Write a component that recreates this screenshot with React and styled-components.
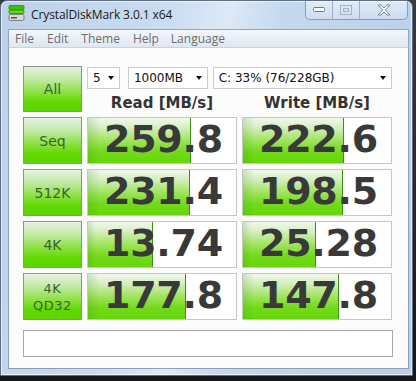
import React from "react";
import styled, { createGlobalStyle } from "styled-components";

const Global = createGlobalStyle`
  html, body {
    margin: 0;
    padding: 0;
    background: linear-gradient(to bottom, #3a3a3a, #161616);
    height: 381px;
    overflow: hidden;
  }
`;

const Win = styled.div`
  width: 413px;
  height: 376px;
  box-sizing: border-box;
  border: 1px solid #5e6f84;
  border-radius: 7px 7px 0 0;
  background: linear-gradient(100deg, #bcd2ea 0%, #c9dcf0 35%, #dde9f6 48%, #c4d8ee 60%, #b8cfe8 100%);
  display: flex;
  flex-direction: column;
  font-family: "DejaVu Sans", Verdana, sans-serif;
  box-shadow: inset 0 0 0 1px rgba(255, 255, 255, 0.6);
`;

const TitleBar = styled.div`
  height: 28px;
  display: flex;
  align-items: flex-start;
  padding-left: 7px;
`;

const Title = styled.span`
  font-family: "Open Sans", "Noto Sans", sans-serif;
  font-size: 12px;
  color: #1a1a1a;
  margin-left: 6px;
  margin-top: 5px;
  letter-spacing: -0.1px;
`;

const Icon = styled.svg`
  margin-top: 4px;
`;

const Caption = styled.div`
  margin-left: auto;
  margin-right: 4px;
  display: flex;
  height: 18px;
  border: 1px solid #8c9db3;
  border-top: none;
  border-radius: 0 0 5px 5px;
  overflow: hidden;
  background: linear-gradient(to bottom, rgba(255, 255, 255, 0.55), rgba(220, 232, 245, 0.4));
`;

const CapBtn = styled.div`
  width: ${(p) => p.w}px;
  display: flex;
  align-items: center;
  justify-content: center;
  border-left: ${(p) => (p.first ? "none" : "1px solid #9fb0c5")};
`;

const MenuBar = styled.div`
  margin-left: 7px;
  width: 401px;
  height: 19px;
  box-sizing: border-box;
  border: 1px solid #93a6bd;
  border-bottom: 1px solid #c9d3df;
  background: linear-gradient(to bottom, #f4f7fb, #dfe7f1);
  display: flex;
  align-items: center;
  padding-left: 6px;
`;

const MenuItem = styled.span`
  font-family: "Open Sans", "Noto Sans", sans-serif;
  font-size: 12px;
  color: #6d6d6d;
  margin-right: ${(p) => p.mr}px;
`;

const Client = styled.div`
  margin-left: 7px;
  width: 401px;
  box-sizing: border-box;
  border: 1px solid #8ea0b6;
  border-top: none;
  background: #fcfcfc;
  padding: 18px 0 11px 14px;
`;

const Grid = styled.div`
  display: grid;
  grid-template-columns: 59px 150px 150px;
  grid-template-rows: 46px repeat(4, 47px);
  column-gap: 5px;
  row-gap: 5px;
`;

const GreenButton = styled.div`
  box-sizing: border-box;
  border: 1px solid #8b9586;
  background: linear-gradient(to bottom, #e6f3df 0%, #c6ebae 25%, #8fe24a 55%, #62d800 80%, #5dd300 100%);
  display: flex;
  flex-direction: column;
  align-items: center;
  justify-content: center;
  font-family: "DejaVu Sans", Verdana, sans-serif;
  font-size: ${(p) => (p.small ? 13 : 14)}px;
  line-height: ${(p) => (p.small ? 17 : 16)}px;
  color: #3f5f30;
  letter-spacing: ${(p) => (p.small ? 0.5 : 0)}px;
`;

const TopArea = styled.div`
  grid-column: 2 / 4;
  display: flex;
  flex-direction: column;
`;

const Combos = styled.div`
  display: flex;
  margin-top: 1px;
  height: 22px;
`;

const Combo = styled.div`
  width: ${(p) => p.w}px;
  margin-right: ${(p) => p.mr || 0}px;
  box-sizing: border-box;
  border: 1px solid #cdcdcd;
  background: #fff;
  display: flex;
  align-items: center;
  padding: 0 5px 0 5px;
  font-size: 12px;
  color: #111;
`;

const Arrow = styled.span`
  margin-left: auto;
  width: 0;
  height: 0;
  border-left: 3.5px solid transparent;
  border-right: 3.5px solid transparent;
  border-top: 4px solid #111;
`;

const Heads = styled.div`
  display: grid;
  grid-template-columns: 150px 150px;
  column-gap: 5px;
  flex: 1;
  align-items: center;
`;

const Head = styled.div`
  text-align: center;
  font-weight: bold;
  font-size: 15px;
  color: #333;
  padding-top: 5px;
`;

const Cell = styled.div`
  position: relative;
  box-sizing: border-box;
  border: 1px solid #c6c6c6;
  background: #fff;
  display: flex;
  align-items: center;
  justify-content: center;
  overflow: hidden;
`;

const Bar = styled.div`
  position: absolute;
  left: 0;
  top: 0;
  bottom: 0;
  border-right: 1px solid #3f8f1a;
  background:
    linear-gradient(to right, rgba(60, 130, 20, 0.18), rgba(60, 130, 20, 0) 12%),
    linear-gradient(to bottom, #f2f8ee 0%, #d2efbd 22%, #a3e563 48%, #72da1a 75%, #66d60a 100%);
`;

const Value = styled.span`
  position: relative;
  font-family: "DejaVu Sans", Verdana, sans-serif;
  font-weight: bold;
  font-size: 38px;
  line-height: 38px;
  color: #393939;
  letter-spacing: -0.2px;
  padding-bottom: 4px;
  padding-left: 3px;
`;

const Status = styled.div`
  margin-top: 10px;
  width: 370px;
  height: 27px;
  box-sizing: border-box;
  border: 1px solid #a7a7a7;
  background: #fff;
`;

const rows = [
  { label: ["Seq"], read: 259.8, write: 222.6, r: "259.8", w: "222.6" },
  { label: ["512K"], read: 231.4, write: 198.5, r: "231.4", w: "198.5" },
  { label: ["4K"], read: 13.74, write: 25.28, r: "13.74", w: "25.28" },
  { label: ["4K", "QD32"], read: 177.8, write: 147.8, r: "177.8", w: "147.8" },
];

// bars use a log scale, like the original
const barWidth = (v) => Math.round(30 + 30 * Math.log10(v));

function Score({ value, text }) {
  return (
    <Cell>
      <Bar style={{ width: barWidth(value) }} />
      <Value>{text}</Value>
    </Cell>
  );
}

export default function App() {
  return (
    <>
      <Global />
      <Win>
        <TitleBar>
          <Icon width="17" height="16" viewBox="0 0 17 16">
            <rect x="1" y="0.5" width="15" height="4" rx="1" fill="#3cc400" stroke="#2a8a00" strokeWidth="0.8" />
            <rect x="1" y="5" width="15" height="3.5" rx="1" fill="#5fd820" stroke="#2a8a00" strokeWidth="0.8" />
            <rect x="1" y="9.5" width="15" height="6" rx="1.5" fill="#d8d8d8" stroke="#6c6c6c" strokeWidth="0.8" />
            <rect x="3" y="12" width="6" height="1.5" fill="#555" />
          </Icon>
          <Title>CrystalDiskMark 3.0.1 x64</Title>
          <Caption>
            <CapBtn w={26} first>
              <svg width="12" height="6" viewBox="0 0 12 6">
                <rect x="0.5" y="0.5" width="11" height="4" rx="1" fill="#fff" stroke="#6d7a8a" />
              </svg>
            </CapBtn>
            <CapBtn w={26}>
              <svg width="12" height="10" viewBox="0 0 12 10">
                <rect x="0.5" y="0.5" width="11" height="9" fill="none" stroke="#a9b5c3" />
                <rect x="3.5" y="3.5" width="5" height="3" fill="none" stroke="#a9b5c3" />
              </svg>
            </CapBtn>
            <CapBtn w={47}>
              <svg width="14" height="12" viewBox="0 0 14 12">
                <path
                  d="M1 1 L4 1 L7 4 L10 1 L13 1 L8.5 6 L13 11 L10 11 L7 8 L4 11 L1 11 L5.5 6 Z"
                  fill="#f4f6f9"
                  stroke="#6e7b8c"
                  strokeWidth="0.9"
                  strokeLinejoin="round"
                />
              </svg>
            </CapBtn>
          </Caption>
        </TitleBar>
        <MenuBar>
          <MenuItem mr={13}>File</MenuItem>
          <MenuItem mr={13}>Edit</MenuItem>
          <MenuItem mr={13}>Theme</MenuItem>
          <MenuItem mr={12}>Help</MenuItem>
          <MenuItem mr={0}>Language</MenuItem>
        </MenuBar>
        <Client>
          <Grid>
            <GreenButton>All</GreenButton>
            <TopArea>
              <Combos>
                <Combo w={33} mr={8}>
                  5<Arrow />
                </Combo>
                <Combo w={80} mr={5}>
                  1000MB<Arrow />
                </Combo>
                <Combo w={180}>
                  C: 33% (76/228GB)<Arrow />
                </Combo>
              </Combos>
              <Heads>
                <Head>Read [MB/s]</Head>
                <Head>Write [MB/s]</Head>
              </Heads>
            </TopArea>
            {rows.map((row) => (
              <React.Fragment key={row.r}>
                <GreenButton small={row.label.length > 1}>
                  {row.label.map((l) => (
                    <span key={l}>{l}</span>
                  ))}
                </GreenButton>
                <Score value={row.read} text={row.r} />
                <Score value={row.write} text={row.w} />
              </React.Fragment>
            ))}
          </Grid>
          <Status />
        </Client>
      </Win>
    </>
  );
}
